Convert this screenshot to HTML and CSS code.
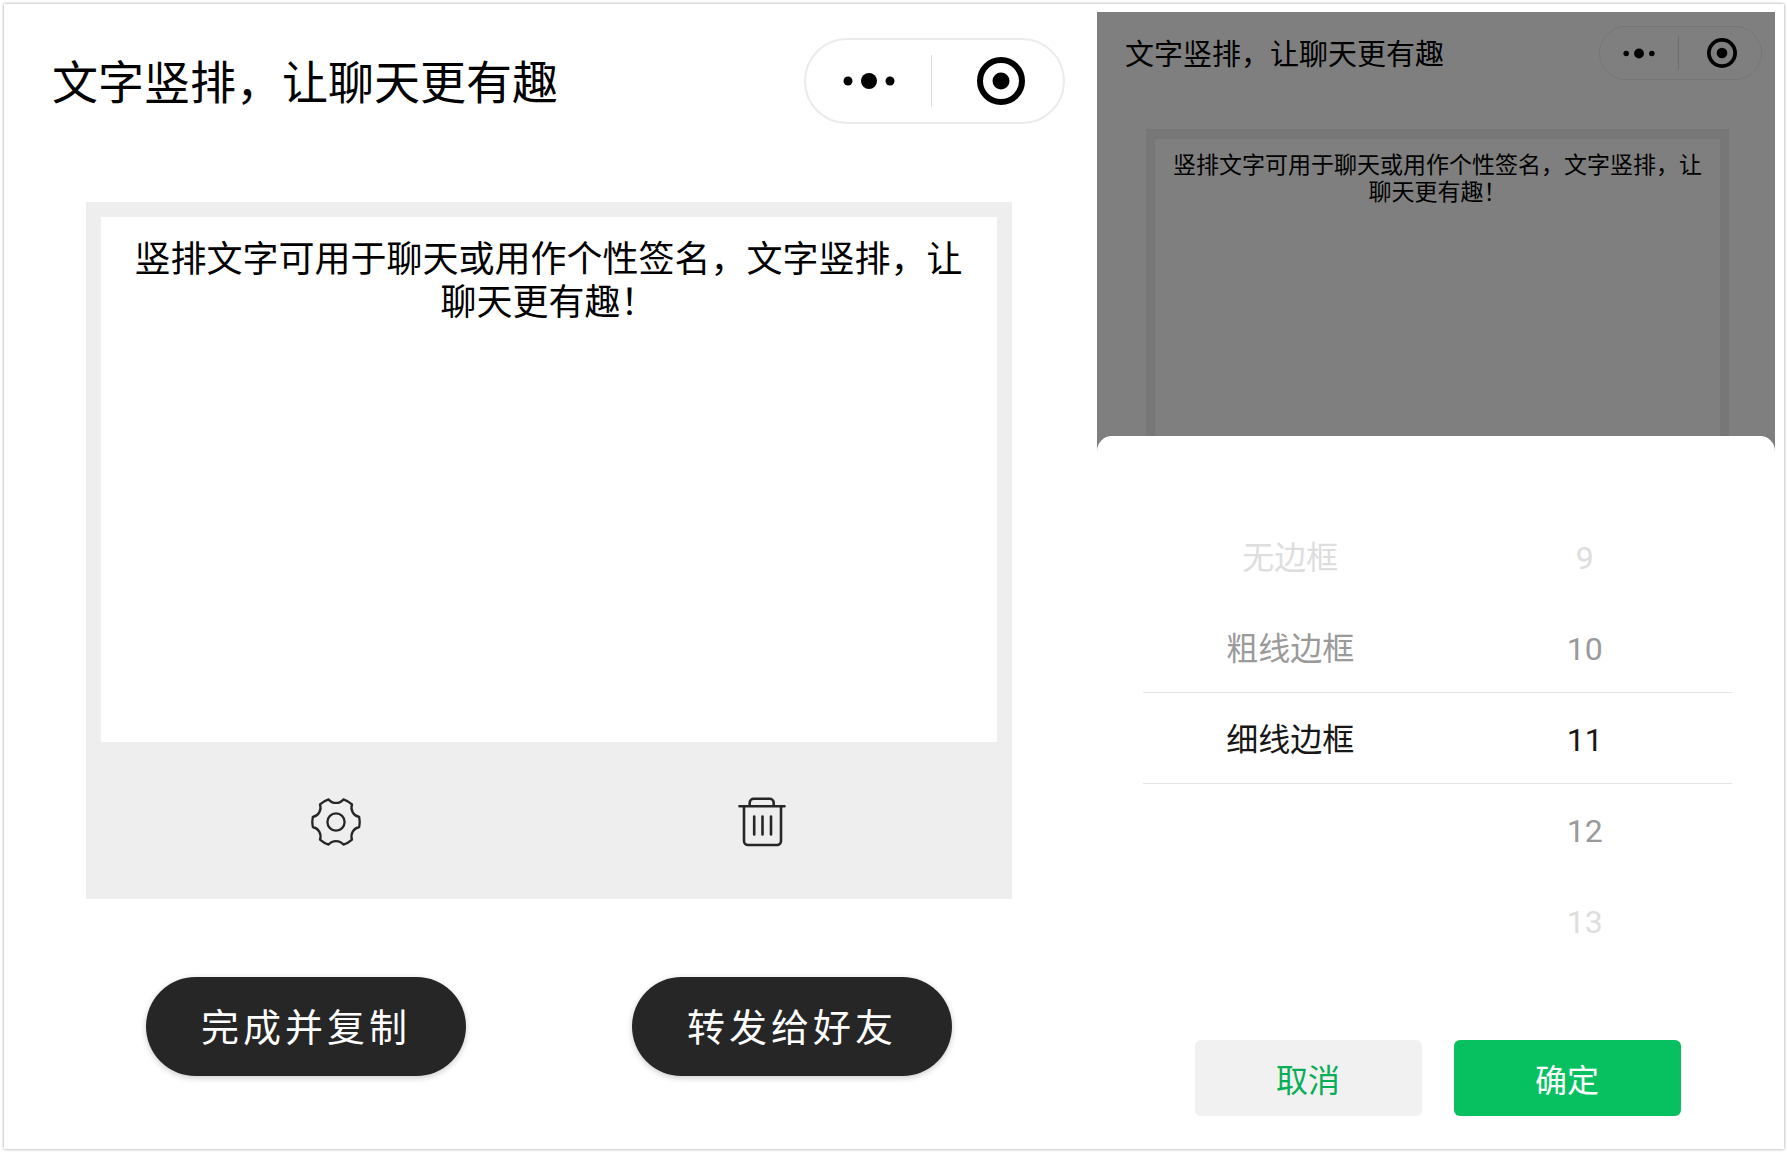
FILE: index.html
```html
<!DOCTYPE html>
<html lang="zh-CN">
<head>
<meta charset="utf-8">
<meta name="viewport" content="width=device-width, initial-scale=1">
<title>文字竖排，让聊天更有趣</title>
<link rel="stylesheet" href="styles.css">
</head>
<body>
<main class="board">
  <section class="screen">
    <header class="topbar">
      <h1 class="title">文字竖排，让聊天更有趣</h1>
      <div class="capsule">
        <button class="capsule-btn" type="button" aria-label="更多">
          <svg class="dots" viewBox="0 0 52 18"><circle cx="5" cy="9" r="4.5"/><circle cx="26" cy="9" r="8"/><circle cx="47" cy="9" r="4.5"/></svg>
        </button>
        <span class="capsule-line"></span>
        <button class="capsule-btn capsule-close" type="button" aria-label="关闭">
          <svg class="target" viewBox="0 0 48 48"><circle cx="24" cy="24" r="21" fill="none" stroke="currentColor" stroke-width="6"/><circle cx="24" cy="24" r="8.5"/></svg>
        </button>
      </div>
    </header>

    <div class="card">
      <textarea class="editor" aria-label="竖排文字">竖排文字可用于聊天或用作个性签名，文字竖排，让聊天更有趣！</textarea>
      <div class="tools">
        <button class="tool" type="button" aria-label="设置">
          <svg class="tool-icon" viewBox="0 0 52 52" stroke-width="2.3"><path d="M49.2 31A9.6 9.6 0 0 0 42 43.6A24 24 0 0 1 33.4 48.6A9.6 9.6 0 0 0 18.6 48.6A24 24 0 0 1 10 43.6A9.6 9.6 0 0 0 2.8 31A24 24 0 0 1 2.8 21A9.6 9.6 0 0 0 10 8.4A24 24 0 0 1 18.6 3.4A9.6 9.6 0 0 0 33.4 3.4A24 24 0 0 1 42 8.4A9.6 9.6 0 0 0 49.2 21A24 24 0 0 1 49.2 31Z"/><circle cx="26" cy="26" r="8.6"/></svg>
        </button>
        <button class="tool" type="button" aria-label="删除">
          <svg class="tool-icon" viewBox="0 0 52 52" stroke-width="2.6"><path d="M3.5 10.3H48.5M13.7 10V6.5A4 4 0 0 1 17.7 2.8H33.7A4 4 0 0 1 37.7 6.5V10M8 10.5V45A4 4 0 0 0 12 49H41A4 4 0 0 0 45 45V10.5M18.2 20.5V38.5M26.5 20.5V38.5M35 20.5V38.5"/></svg>
        </button>
      </div>
    </div>

    <div class="actions">
      <button class="pill" type="button">完成并复制</button>
      <button class="pill" type="button">转发给好友</button>
    </div>
  </section>

  <section class="screen screen-small">
    <div class="behind">
      <header class="topbar">
        <h2 class="title">文字竖排，让聊天更有趣</h2>
        <div class="capsule">
          <button class="capsule-btn" type="button" aria-label="更多">
            <svg class="dots" viewBox="0 0 52 18"><circle cx="5" cy="9" r="4.5"/><circle cx="26" cy="9" r="8"/><circle cx="47" cy="9" r="4.5"/></svg>
          </button>
          <span class="capsule-line"></span>
          <button class="capsule-btn capsule-close" type="button" aria-label="关闭">
            <svg class="target" viewBox="0 0 48 48"><circle cx="24" cy="24" r="21" fill="none" stroke="currentColor" stroke-width="6"/><circle cx="24" cy="24" r="8.5"/></svg>
          </button>
        </div>
      </header>
      <div class="card">
        <textarea class="editor" aria-label="竖排文字" readonly>竖排文字可用于聊天或用作个性签名，文字竖排，让聊天更有趣！</textarea>
      </div>
    </div>

    <form class="sheet">
      <div class="picker">
        <div class="wheel" role="radiogroup" aria-label="边框">
          <input class="pick" type="radio" name="border" id="b0"><label class="option far" for="b0">无边框</label>
          <input class="pick" type="radio" name="border" id="b1"><label class="option near" for="b1">粗线边框</label>
          <input class="pick" type="radio" name="border" id="b2" checked><label class="option" for="b2">细线边框</label>
        </div>
        <div class="wheel" role="radiogroup" aria-label="字数">
          <input class="pick" type="radio" name="size" id="s9"><label class="option far" for="s9">9</label>
          <input class="pick" type="radio" name="size" id="s10"><label class="option near" for="s10">10</label>
          <input class="pick" type="radio" name="size" id="s11" checked><label class="option" for="s11">11</label>
          <input class="pick" type="radio" name="size" id="s12"><label class="option near" for="s12">12</label>
          <input class="pick" type="radio" name="size" id="s13"><label class="option far" for="s13">13</label>
        </div>
      </div>
      <div class="sheet-actions">
        <button class="btn" type="button">取消</button>
        <button class="btn btn-primary" type="button">确定</button>
      </div>
    </form>
  </section>
</main>
</body>
</html>
```

FILE: styles.css
```css
* {
  box-sizing: border-box;
}

body {
  margin: 0;
  padding: 4px;
  background: #fff;
  color: #000;
  font-family: Roboto, "Noto Sans CJK SC", sans-serif;
}

button,
textarea {
  margin: 0;
  padding: 0;
  border: 0;
  background: none;
  color: inherit;
  font: inherit;
}

.board {
  display: grid;
  grid-template-columns: minmax(0, 1093fr) minmax(0, 678fr);
  padding-right: 9px;
  box-shadow: 0 0 3px rgba(0, 0, 0, 0.4);
}

/* Mini-program header */

.topbar {
  display: flex;
  align-items: center;
  justify-content: space-between;
  padding: 34px 32px 0 48px;
}

.title {
  margin: 0;
  padding-top: 4px;
  font-size: 46px;
  line-height: 60px;
  font-weight: 400;
  white-space: nowrap;
}

.capsule {
  display: flex;
  align-items: center;
  width: 261px;
  height: 86px;
  border: 2px solid #ebebeb;
  border-radius: 43px;
}

.capsule-btn {
  flex: 1;
  display: flex;
  align-items: center;
  justify-content: center;
}

.capsule-close {
  padding-left: 6px;
}

.capsule-line {
  width: 1px;
  height: 52px;
  background: #dcdcdc;
}

.dots {
  width: 52px;
  height: 18px;
  fill: currentColor;
}

.target {
  width: 48px;
  height: 48px;
  fill: currentColor;
}

/* Editor card */

.card {
  margin: 78px 85px 0 82px;
  padding: 15px 15px 0;
  background: #eee;
}

.editor {
  display: block;
  width: 100%;
  height: 525px;
  padding: 22px 31px 20px 30px;
  background: #fff;
  font-size: 36px;
  line-height: 43px;
  text-align: center;
  resize: none;
  outline: 0;
  overflow: hidden;
}

.tools {
  display: grid;
  grid-template-columns: 1fr 1fr;
  margin: 0 -15px;
  padding: 54px 37px 51px;
}

.tool {
  display: flex;
  justify-content: center;
}

.tool-icon {
  width: 52px;
  height: 52px;
  fill: none;
  stroke: #262626;
  stroke-linecap: round;
  stroke-linejoin: round;
}

.actions {
  display: flex;
  justify-content: center;
  gap: 166px;
  padding: 78px 85px 73px 82px;
}

.pill {
  width: 320px;
  height: 99px;
  padding-bottom: 4px;
  border-radius: 50px;
  background: #262626;
  color: #fff;
  font-size: 38px;
  letter-spacing: 4px;
  box-shadow: 0 2px 6px rgba(0, 0, 0, 0.2);
}

/* Second screen: page dimmed behind the picker sheet */

.screen-small {
  display: flex;
  flex-direction: column;
  padding-top: 8px;
}

.behind {
  position: relative;
}

.behind::after {
  content: "";
  position: absolute;
  inset: 0;
  background: rgba(0, 0, 0, 0.5);
}

.screen-small .topbar {
  padding: 14px 13px 0 28px;
}

.screen-small .title {
  font-size: 29px;
  line-height: 40px;
}

.screen-small .capsule {
  width: 163px;
  height: 54px;
  border-width: 1px;
}

.screen-small .capsule-close {
  padding-left: 4px;
}

.screen-small .capsule-line {
  height: 34px;
}

.screen-small .dots {
  width: 32px;
  height: 11px;
}

.screen-small .target {
  width: 30px;
  height: 30px;
}

.screen-small .card {
  margin: 49px 46px 0 49px;
  padding: 10px 9px 0;
}

.screen-small .editor {
  height: 312px;
  padding: 13px 14px;
  font-size: 23px;
  line-height: 27px;
}

.sheet {
  position: relative;
  z-index: 1;
  flex: 1;
  margin: -15px 0 0;
  padding: 74px 43px 30px 46px;
  border-radius: 15px 15px 0 0;
  background: #fff;
}

.picker {
  display: grid;
  grid-template-columns: 1fr 1fr;
}

.wheel {
  position: relative;
}

.pick {
  position: absolute;
  opacity: 0;
  pointer-events: none;
}

.option {
  display: block;
  height: 91px;
  padding-top: 3px;
  color: #171717;
  font-size: 32px;
  line-height: 91px;
  text-align: center;
}

.option.near {
  color: #9a9a9a;
}

.option.far {
  color: #dedede;
}

.pick:checked + .option {
  box-shadow: inset 0 1px #e5e5e5, 0 1px #e5e5e5;
}

.sheet-actions {
  display: flex;
  justify-content: center;
  gap: 32px;
  padding-top: 75px;
}

.btn {
  width: 227px;
  height: 76px;
  border-radius: 6px;
  background: #f1f1f1;
  color: #06ae56;
  font-size: 32px;
}

.btn-primary {
  background: #07c160;
  color: #fff;
}
```
